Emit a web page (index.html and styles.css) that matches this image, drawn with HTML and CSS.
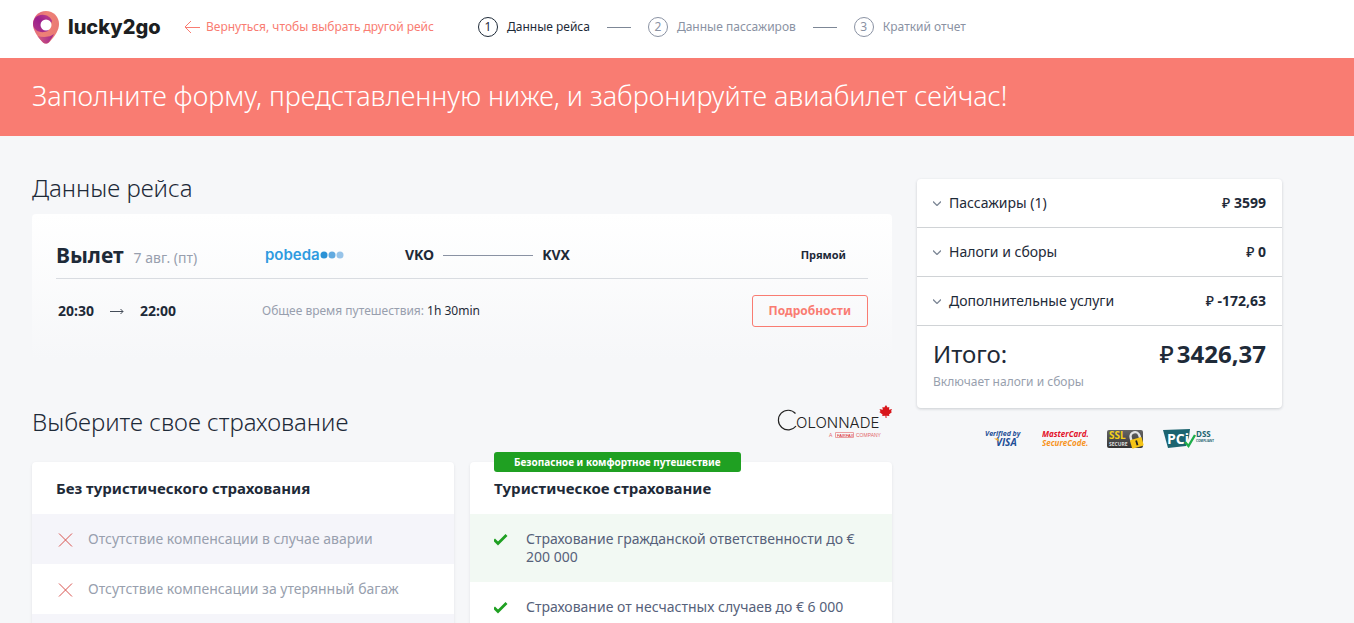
FILE: index.html
```html
<!DOCTYPE html>
<html lang="ru">
<head>
<meta charset="utf-8">
<meta name="viewport" content="width=device-width, initial-scale=1">
<title>lucky2go</title>
<link rel="stylesheet" href="styles.css">
</head>
<body>
<header class="header">
  <a class="logo" href="#">
    <svg class="logo-pin" width="28" height="34" viewBox="0 0 28 34" aria-hidden="true">
      <defs>
        <linearGradient id="pin" x1="0" y1="0" x2="1" y2="0.3"><stop offset="0" stop-color="#d9577e"/><stop offset="0.5" stop-color="#ee8277"/><stop offset="1" stop-color="#ea7a74"/></linearGradient>
        <linearGradient id="swirl" x1="1" y1="0" x2="0" y2="1"><stop offset="0" stop-color="#c0448c"/><stop offset="0.5" stop-color="#9c1f8c"/><stop offset="1" stop-color="#b23c88"/></linearGradient>
        <linearGradient id="tail"><stop offset="0" stop-color="#d45c80"/><stop offset="1" stop-color="#a0268c"/></linearGradient>
      </defs>
      <path fill="url(#pin)" d="M14 1C6.500 1 1 6.700 1 14c0 6 3.500 11.500 9.500 18 2 2 5 2 7 0C23.500 25.500 27 20 27 14 27 6.700 21.500 1 14 1z"/>
      <path fill="url(#swirl)" d="M1 14C1.200 8.500 5 4.700 10.500 4.700c5 0 8.500 3 9.500 6.300L16 21C9 24 1.500 21 1 14z"/>
      <path fill="url(#tail)" d="M5.500 26c4 1 9.500 1.500 14-.5 1-.4 1.800-.8 2.500-1.500-1.200 2.700-3 5.500-5 8-2 2-4.500 2-6.500 0-2-2.200-3.600-4-5-6z"/>
      <circle cx="14" cy="15" r="5.500" fill="#fff"/>
    </svg>
    <span>lucky2go</span>
  </a>
  <a class="back" href="#">
    <svg width="16" height="14" viewBox="0 0 16 14" fill="none" stroke="currentColor" aria-hidden="true"><path d="M7 1 1 7l6 6M1 7.500h15"/></svg>
    <span>Вернуться, чтобы выбрать другой рейс</span>
  </a>
  <ol class="steps">
    <li class="step step-active"><span class="step-num">1</span>Данные рейса</li>
    <li class="step"><span class="step-num">2</span>Данные пассажиров</li>
    <li class="step"><span class="step-num">3</span>Краткий отчет</li>
  </ol>
</header>

<div class="banner">Заполните форму, представленную ниже, и забронируйте авиабилет сейчас!</div>

<div class="page">
  <main class="content">
    <h1 class="title">Данные рейса</h1>
    <section class="flight">
      <div class="flight-row flight-head">
        <div class="departure"><h2>Вылет</h2><span>7 авг. (пт)</span></div>
        <div class="airline">
          <span>pobeda</span>
          <svg width="24" height="8" viewBox="0 0 24 8" aria-hidden="true"><circle cx="4" cy="4" r="3.500" fill="#2b92d6"/><circle cx="12" cy="4" r="3.500" fill="#62aae0"/><circle cx="20" cy="4" r="3.500" fill="#98c4e9"/></svg>
        </div>
        <div class="route"><b>VKO</b><span class="route-line"></span><b>KVX</b></div>
        <b class="direct">Прямой</b>
      </div>
      <div class="flight-row flight-times">
        <div class="times">
          <b>20:30</b>
          <svg width="14" height="8" viewBox="0 0 14 8" fill="none" stroke="#444c58" aria-hidden="true"><path d="M0 4.500h13M10.500 2l2.500 2.500L10.500 7"/></svg>
          <b>22:00</b>
        </div>
        <div class="duration">Общее время путешествия: <span>1h 30min</span></div>
        <button class="details" type="button">Подробности</button>
      </div>
    </section>

    <div class="insurance-head">
      <h2 class="title">Выберите свое страхование</h2>
      <svg class="colonnade" width="118" height="34" viewBox="0 0 118 34" role="img" aria-label="Colonnade, a Fairfax company">
        <path d="M21.500 8.500A9.800 9.800 0 1 0 22 21" fill="none" stroke="#222" stroke-width="1.200"/>
        <text class="colonnade-name" x="22" y="23">OLONNADE</text>
        <path fill="#d8161b" d="m112 0 1.600 2.600 1.700-.6-.3 2.700 3-.7-1 2.300 1 .8-3 2.400.4 1.600-3-.4.200 2.300h-1l-.2-2.300-3.200.4.400-1.600-3.300-2.400 1.200-.8-1-2.300 3.300.7-.4-2.700 1.800.6z"/>
        <text class="colonnade-sub" x="55" y="32">A</text>
        <path d="M61.500 27.500h18v5h-18z" fill="none" stroke="#eba0a2"/>
        <text class="colonnade-sub colonnade-brand" x="63" y="32">FAIRFAX</text>
        <text class="colonnade-sub" x="82" y="32">COMPANY</text>
      </svg>
    </div>

    <div class="plans">
      <section class="plan">
        <h3>Без туристического страхования</h3>
        <ul class="plan-list">
          <li><svg width="20" height="18" viewBox="0 0 20 18" fill="none" stroke="#d9534f" aria-hidden="true"><path d="m3 3.500 13 13m0-13-13 13"/></svg>Отсутствие компенсации в случае аварии</li>
          <li><svg width="20" height="18" viewBox="0 0 20 18" fill="none" stroke="#d9534f" aria-hidden="true"><path d="m3 3.500 13 13m0-13-13 13"/></svg>Отсутствие компенсации за утерянный багаж</li>
          <li></li>
        </ul>
      </section>
      <section class="plan plan-full">
        <span class="ribbon">Безопасное и комфортное путешествие</span>
        <h3>Туристическое страхование</h3>
        <ul class="plan-list">
          <li><svg width="20" height="18" viewBox="0 0 20 18" fill="none" stroke="#1fa022" stroke-width="2.800" aria-hidden="true"><path d="m0 9.500 4 4L12.500 5"/></svg><span>Страхование гражданской ответственности до € 200 000</span></li>
          <li><svg width="20" height="18" viewBox="0 0 20 18" fill="none" stroke="#1fa022" stroke-width="2.800" aria-hidden="true"><path d="m0 9.500 4 4L12.500 5"/></svg><span>Страхование от несчастных случаев до € 6 000</span></li>
        </ul>
      </section>
    </div>
  </main>

  <aside class="aside">
    <div class="summary">
      <button class="summary-row" type="button">
        <svg width="8" height="6" viewBox="0 0 8 6" fill="none" stroke="#7d8796" stroke-width="1.300" aria-hidden="true"><path d="m0 1.500 4 4 4-4"/></svg>
        <span>Пассажиры (1)</span><b><i>₽</i> 3599</b>
      </button>
      <button class="summary-row" type="button">
        <svg width="8" height="6" viewBox="0 0 8 6" fill="none" stroke="#7d8796" stroke-width="1.300" aria-hidden="true"><path d="m0 1.500 4 4 4-4"/></svg>
        <span>Налоги и сборы</span><b><i>₽</i> 0</b>
      </button>
      <button class="summary-row" type="button">
        <svg width="8" height="6" viewBox="0 0 8 6" fill="none" stroke="#7d8796" stroke-width="1.300" aria-hidden="true"><path d="m0 1.500 4 4 4-4"/></svg>
        <span>Дополнительные услуги</span><b><i>₽</i> -172,63</b>
      </button>
      <div class="total">
        <div class="total-line"><span>Итого:</span><b><i>₽</i>3426,37</b></div>
        <p>Включает налоги и сборы</p>
      </div>
    </div>
    <div class="badges">
      <svg width="38" height="20" viewBox="0 0 38 20" role="img" aria-label="Verified by Visa">
        <text class="badge-verified" x="0" y="7">Verified by</text>
        <text class="badge-visa" x="11" y="17">VISA</text>
        <path fill="#f5a623" d="M9 9.500h4l1 3z"/>
      </svg>
      <svg width="46" height="20" viewBox="0 0 46 20" role="img" aria-label="MasterCard SecureCode">
        <text class="badge-master" x="0" y="8">MasterCard.</text>
        <text class="badge-secure" x="0" y="17">SecureCode.</text>
      </svg>
      <svg width="37" height="20" viewBox="0 0 37 20" role="img" aria-label="SSL Secure">
        <defs><linearGradient id="ssl" x1="0" y1="0" x2="0" y2="1"><stop offset="0" stop-color="#666"/><stop offset="1" stop-color="#333"/></linearGradient></defs>
        <rect y="1" width="36" height="18" rx="2" fill="url(#ssl)"/>
        <text class="badge-ssl" x="2" y="10">SSL</text>
        <text class="badge-ssl-sub" x="2" y="17">SECURE</text>
        <g transform="rotate(-16 29 11)"><path d="M24.500 11V7.500a4.500 4.500 0 0 1 9 0V11" fill="none" stroke="#e4e4e4" stroke-width="2.400"/><rect x="23" y="9.500" width="12" height="9" rx="1" fill="#f5c518"/><path stroke="#222" stroke-width="1.800" d="M29 11.500v5"/></g>
      </svg>
      <svg width="52" height="20" viewBox="0 0 52 20" role="img" aria-label="PCI DSS compliant">
        <path fill="#1c6470" d="m0 1 27-1-1 8-3 9-18 2z"/>
        <text class="badge-pci" x="4" y="15">PCi</text>
        <path d="m22 13 3.500 4L32 6" fill="none" stroke="#1fae4b" stroke-width="2.400"/>
        <text class="badge-dss" x="33" y="8">DSS</text>
        <text class="badge-dss-sub" x="33" y="13">COMPLIANT</text>
      </svg>
    </div>
  </aside>
</div>
</body>
</html>
```
FILE: styles.css
```css
* {
  box-sizing: border-box;
}

body {
  margin: 0;
  background: #f6f7f9;
  color: #1e2a38;
  font-family: "Noto Sans", "Open Sans", sans-serif;
  font-size: 14px;
  line-height: 18px;
}

h1, h2, h3, p, ul, ol {
  margin: 0;
  padding: 0;
}

ul, ol {
  list-style: none;
}

svg {
  display: block;
  flex-shrink: 0;
}

i {
  font-style: normal;
  font-weight: 500;
}

.header {
  display: flex;
  align-items: center;
  height: 58px;
  padding: 0 32px 4px;
  background: #fff;
  white-space: nowrap;
}

.logo {
  display: flex;
  align-items: center;
  gap: 8px;
  width: 152px;
  color: #1d1f22;
  font: 800 20px/28px Inter, sans-serif;
  text-decoration: none;
}

.back {
  display: flex;
  align-items: center;
  gap: 6px;
  color: #f97c72;
  font-size: 12px;
  text-decoration: none;
}

.steps {
  display: flex;
  margin-left: 44px;
}

.step {
  display: flex;
  align-items: center;
  color: #8a92a3;
  font-size: 12px;
}

.step + .step::before {
  width: 24px;
  height: 1px;
  margin: 0 17px;
  background: #7d8796;
  content: "";
}

.step-num {
  width: 20px;
  height: 20px;
  margin-right: 9px;
  border: 1px solid currentColor;
  border-radius: 50%;
  text-align: center;
}

.step-active {
  color: #1e2a38;
}

.banner {
  padding: 20px 32px 22px;
  background: #f97c72;
  color: #fff;
  font-size: 27px;
  font-weight: 300;
  line-height: 36px;
}

.page {
  display: grid;
  grid-template-columns: minmax(0, 1fr) 365px;
  gap: 25px;
  padding: 35px 72px 0 32px;
}

.title {
  font-size: 24px;
  font-weight: 300;
  line-height: 34px;
}

.flight {
  margin-top: 9px;
  padding: 24px 24px 32px;
  border-radius: 4px;
  background: linear-gradient(#fff, #f6f7f9);
}

.flight-row {
  display: grid;
  grid-template-columns: 206px 143px 1fr auto;
  align-items: center;
}

.flight-head {
  height: 41px;
  padding-bottom: 6px;
  border-bottom: 1px solid #d9dce1;
}

.departure {
  display: flex;
  align-items: baseline;
  gap: 10px;
  color: #989fae;
}

.departure h2 {
  color: #1e2a38;
  font-size: 21px;
  line-height: 28px;
}

.airline {
  display: flex;
  align-items: center;
  padding-left: 3px;
  color: #2f9be0;
  font: 600 15px/20px Inter, sans-serif;
}

.route {
  display: flex;
  align-items: center;
  gap: 9px;
}

.route-line {
  width: 90px;
  height: 1px;
  background: #8a92a3;
}

.direct {
  padding-right: 22px;
  font-size: 11px;
}

.flight-times {
  grid-template-columns: 206px 1fr auto;
  margin-top: 16px;
}

.times {
  display: flex;
  align-items: center;
  gap: 16px;
  padding-left: 2px;
}

.duration {
  color: #989fae;
  font-size: 12px;
}

.duration span {
  color: #1e2a38;
}

.details {
  height: 32px;
  padding: 0 16px;
  border: 1px solid #f97c72;
  border-radius: 3px;
  background: transparent;
  color: #f97c72;
  font: inherit;
  font-size: 12px;
  font-weight: 700;
}

.insurance-head {
  display: flex;
  align-items: center;
  justify-content: space-between;
  margin-top: 46px;
}

.colonnade-name {
  fill: #222;
  font: 300 15px Inter, sans-serif;
}

.colonnade-sub {
  fill: #e2666a;
  font: 5px "Liberation Sans", sans-serif;
}

.colonnade-brand {
  fill: #d8161b;
  font-size: 4px;
}

.plans {
  display: grid;
  grid-template-columns: 1fr 1fr;
  gap: 16px;
  margin-top: 23px;
}

.plan {
  position: relative;
  border-radius: 4px;
  background: #fff;
  box-shadow: 0 1px 3px rgba(30, 42, 56, 0.1);
}

.plan h3 {
  padding: 16px 24px;
  font-size: 15px;
  line-height: 20px;
}

.plan-list li {
  display: flex;
  gap: 12px;
  padding: 16px 24px;
  color: #989fae;
}

.plan-list li:nth-child(odd) {
  background: #f5f5fa;
}

.plan-full .plan-list li {
  color: #56617a;
}

.plan-full .plan-list li:nth-child(odd) {
  background: #f2f9f3;
}

.ribbon {
  position: absolute;
  top: -10px;
  left: 24px;
  padding: 0 20px;
  border-radius: 3px;
  background: #1fa022;
  color: #fff;
  font-size: 10px;
  font-weight: 700;
  line-height: 20px;
}

.aside {
  padding-top: 8px;
}

.summary {
  border-radius: 4px;
  background: #fff;
  box-shadow: 0 1px 3px rgba(30, 42, 56, 0.2);
}

.summary-row {
  display: flex;
  align-items: center;
  gap: 8px;
  width: 100%;
  height: 49px;
  padding: 0 16px;
  border: 0;
  border-bottom: 1px solid #d0d3d6;
  background: transparent;
  color: inherit;
  font: inherit;
}

.summary-row b {
  margin-left: auto;
}

.total {
  padding: 11px 16px 17px;
}

.total-line {
  display: flex;
  justify-content: space-between;
  font-size: 24px;
  line-height: 34px;
}

.total-line i {
  margin-right: 3px;
}

.total p {
  margin-top: 2px;
  color: #989fae;
  font-size: 12px;
}

.badges {
  display: flex;
  justify-content: center;
  gap: 19px;
  margin-top: 21px;
}

.badges text {
  font-family: "Open Sans", sans-serif;
  font-weight: 700;
}

.badges .badge-verified {
  fill: #1f4f96;
  font-size: 7px;
  font-style: italic;
}

.badges .badge-visa {
  fill: #1f4f96;
  font-size: 10px;
  font-style: italic;
}

.badges .badge-master {
  fill: #e3122a;
  font-size: 8px;
  font-style: italic;
}

.badges .badge-secure {
  fill: #f7941d;
  font-size: 8px;
  font-style: italic;
}

.badges .badge-ssl {
  fill: #f5d018;
  font-size: 10px;
}

.badges .badge-ssl-sub {
  fill: #ddd;
  font-size: 5px;
}

.badges .badge-pci {
  fill: #fff;
  font-size: 14px;
}

.badges .badge-dss {
  fill: #1c6470;
  font-size: 8px;
}

.badges .badge-dss-sub {
  fill: #1c6470;
  font-size: 3px;
}
```
